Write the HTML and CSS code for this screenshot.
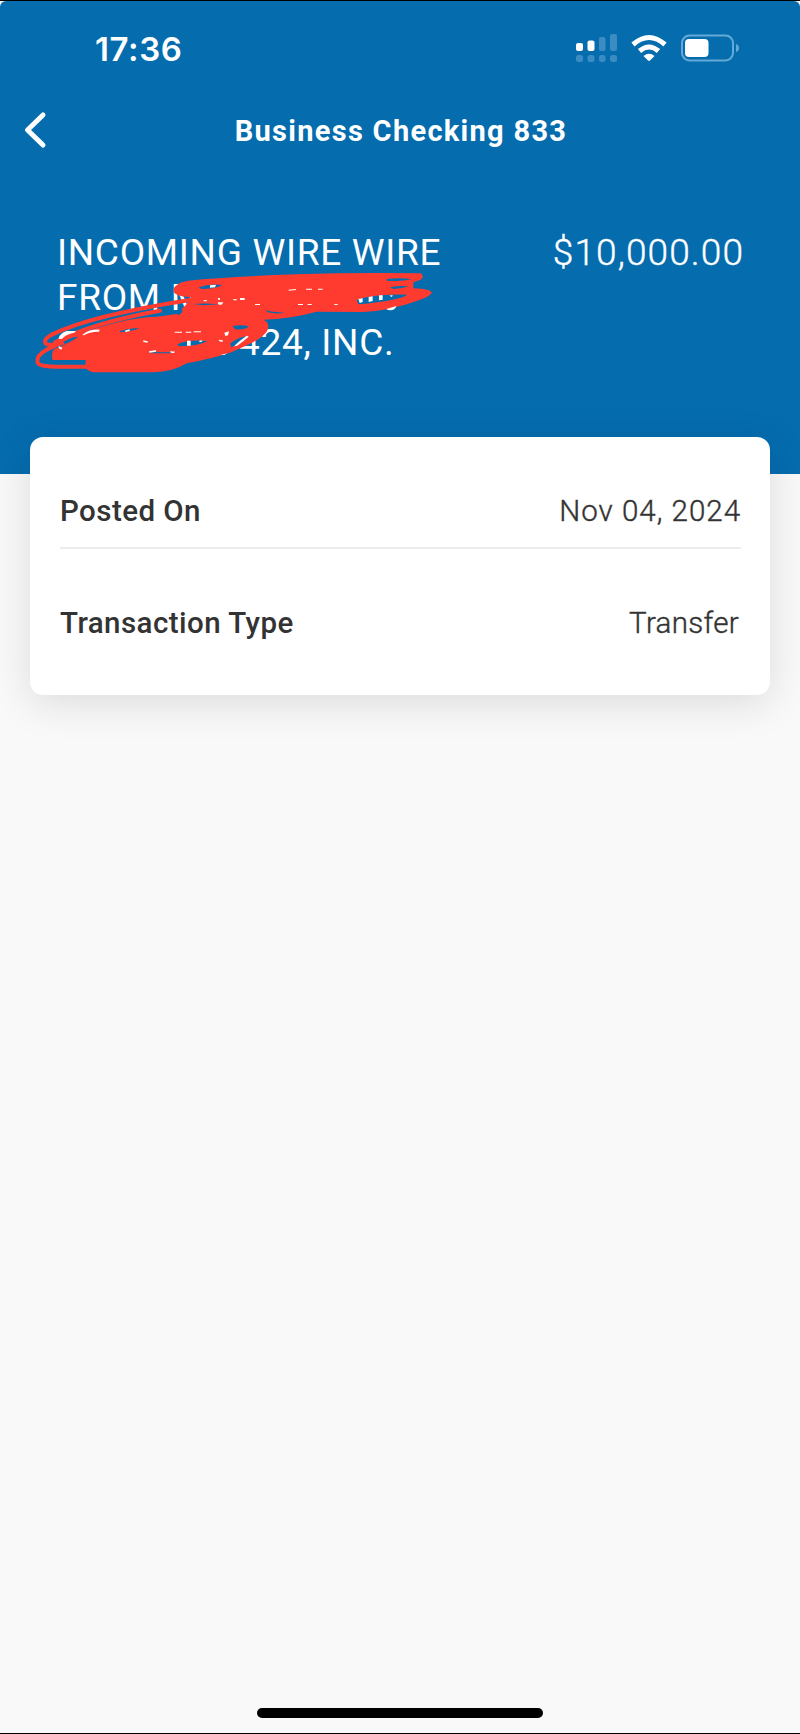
FILE: index.html
```html
<!DOCTYPE html>
<html lang="en">
  <head>
    <meta charset="UTF-8" />
    <meta name="viewport" content="width=device-width, initial-scale=1.0" />
    <title>Business Checking 833</title>
    <link rel="stylesheet" href="styles.css">
  </head>
  <body>
    <div class="screen">
      <header class="header">
        <div class="status-bar">
          <div class="time">17:36</div>
          <svg class="status-icons" width="170" height="32" viewBox="0 0 170 32">
            <g fill="#fff">
              <rect x="6" y="11" width="7" height="8" rx="2" />
              <rect x="17.5" y="8.5" width="7" height="10.5" rx="2" />
            </g>
            <g fill="#3a8cc3">
              <rect x="29" y="5" width="6.5" height="14" rx="2" />
              <rect x="40" y="2" width="7" height="17" rx="2" />
              <rect x="6" y="23" width="7" height="7" rx="2.5" />
              <rect x="17.5" y="23" width="7" height="7" rx="2.5" />
              <rect x="29" y="23" width="6.5" height="7" rx="2.5" />
              <rect x="40" y="23" width="7" height="7" rx="2.5" />
            </g>
            <g fill="none" stroke="#fff" stroke-width="5">
              <path d="M63 12.5Q79 -1.5 95 12.5" />
              <path d="M69.5 19Q79 11 88.5 19" />
            </g>
            <path d="M73.5 24Q79 19.5 84.5 24L80 28.5Q79 29.3 78 28.5Z" fill="#fff" />
            <rect x="112" y="3.5" width="51" height="25" rx="7.5" fill="none" stroke="#65a9d5" stroke-width="2" />
            <rect x="115" y="7" width="23.5" height="18" rx="4" fill="#fff" />
            <path d="M166 12Q169 13 169 16T166 20Z" fill="#65a9d5" />
          </svg>
        </div>
        <nav class="nav">
          <svg class="back" width="24" height="38" viewBox="0 0 24 38">
            <path d="M20 4L4.5 19L20 34" fill="none" stroke="#fff" stroke-width="5" stroke-linecap="round" stroke-linejoin="round" />
          </svg>
          <h1 class="title">Business Checking 833</h1>
        </nav>
        <div class="summary">
          <div class="description">
            <div class="line1">INCOMING WIRE WIRE</div>
            <div class="line2">FROM M</div>
            <div class="line3">424, INC.</div>
            <svg class="scribble" width="420" height="160" viewBox="0 0 1260 480">
              <g fill="#ff3b30">
                <path d="M430 210Q432 190 475 182Q600 170 800 163Q980 157 1172 160Q1185 170 1172 179L1150 187L1150 205Q1207 207 1205 220Q1195 232 1160 243Q1080 272 1000 276L860 275Q780 297 700 299Q724 310 710 335Q690 362 620 389Q590 406 470 430Q430 455 370 457L190 457Q168 452 166 438L167 420L68 420Q62 400 72 388Q118 370 150 341Q260 302 350 292L440 288Q464 278 455 266Q478 248 482 231Q430 230 430 210Z" />
              </g>
              <g fill="none" stroke="#ff3b30" stroke-width="12" stroke-linecap="round">
                <path d="M480 240C320 265 150 302 65 344C35 360 40 377 70 374C160 335 280 310 440 288" />
                <path d="M150 348C70 378 18 395 22 425C24 443 75 440 175 440" />
                <path d="M75 367C140 333 230 300 390 272" />
              </g>
              <!-- gaps between the pen strokes -->
              <g fill="#056cae">
                <path d="M100 366Q125 350 145 350Q130 362 104 372Z" />
                <path d="M505 202Q540 190 578 195Q555 207 515 207Z" />
                <path d="M1070 177Q1110 172 1145 178Q1110 186 1070 182Z" />
                <path d="M1080 202Q1110 196 1135 199Q1115 207 1090 207Z" />
                <path d="M980 239Q1040 222 1132 224Q1110 241 985 253Z" />
                <path d="M607 319Q632 313 657 319Q643 331 616 328Z" />
                <path d="M441 374Q470 358 532 363Q510 377 450 379Z" />
                <path d="M600 371Q620 354 650 348Q634 370 604 382Z" />
                <path d="M490 252Q525 249 566 253L520 256Z" />
                <path d="M705 270Q725 277 765 278Q738 283 714 277Z" />
                <path d="M270 333Q300 323 328 325Q315 333 270 337Z" />
                <path d="M360 397H432L420 400H360Z" />
              </g>
              <g fill="#fff">
                <path d="M85 356Q90 339 110 333H138L133 338Q105 343 96 357Z" />
                <path d="M157 345Q177 327 209 329L207 335Q180 334 162 346Z" />
                <path d="M86 378L97 383L94 389L86 385Z" />
                <path d="M284 332L299 328V333L287 336Z" />
                <path d="M340 361L353 364V368L340 366Z" />
                <path d="M357 394L378 390V395L359 398Z" />
                <path d="M421 393L435 395L432 399L422 398Z" />
                <path d="M434 335H456V338H434ZM467 335H484V338H467ZM491 334H513V337H491Z" />
                <path d="M471 362H482V377H471ZM508 362L518 361L514 366H508Z" />
                <path d="M583 338L597 334L594 346L586 348ZM566 359L579 361L577 366L568 364Z" />
                <path d="M566 402Q580 405 592 399L583 405Z" />
                <path d="M612 379Q630 360 650 347L656 350Q640 364 622 377Z" />
                <path d="M540 196L558 194L555 202L540 203Z" />
                <path d="M563 247H580L575 254H566ZM564 234H570V239H564ZM521 240H530V244H521Z" />
                <path d="M610 237H620V241H610ZM630 234H644V240H630ZM675 252H690V255H675Z" />
                <path d="M776 209L798 207V210L776 212ZM828 206H846V209H828ZM864 206H878V209H864Z" />
                <path d="M804 252H819V255H804ZM833 252H845V255H833ZM913 252H923V255H913Z" />
                <path d="M985 237L998 235V246L989 249ZM1016 231L1028 229V243L1016 246ZM1047 226H1058V239L1047 241ZM1078 227L1088 225L1086 231Z" />
                <path d="M1069 267L1099 258Q1096 270 1082 271Q1072 271 1069 267Z" />
              </g>
            </svg>
          </div>
          <div class="amount">$10,000.00</div>
        </div>
      </header>
      <main class="card">
        <div class="row">
          <span class="label">Posted On</span>
          <span class="value date">Nov 04, 2024</span>
        </div>
        <div class="row">
          <span class="label">Transaction Type</span>
          <span class="value transfer">Transfer</span>
        </div>
      </main>
      <div class="home-indicator"></div>
    </div>
  </body>
</html>
```
FILE: styles.css
```css
* {
  box-sizing: border-box;
}
body {
  margin: 0;
  background: #fff;
  font-family: Roboto, "Liberation Sans", sans-serif;
}
.screen {
  display: flex;
  flex-direction: column;
  height: 1734px;
  border-top: 1px solid #000;
  border-bottom: 1px solid #000;
  background: #f9f9f9;
  overflow: hidden;
}
.header {
  height: 473px;
  flex-shrink: 0;
  background: #056cae;
  color: #fff;
  border-radius: 6px 6px 0 0;
  box-shadow: 0 -8px 0 #fff;
}
.status-bar {
  display: flex;
  justify-content: space-between;
  align-items: center;
  height: 94px;
  padding: 0 60px 0 95px;
}
.time {
  font-family: Inter, "Liberation Sans", sans-serif;
  font-size: 33px;
  font-weight: 600;
  line-height: 40px;
  letter-spacing: 0.6px;
  margin-top: 2px;
}
.nav {
  display: grid;
  grid-template-columns: 24px 1fr 24px;
  align-items: center;
  height: 70px;
  padding: 0 23px;
}
.title {
  margin: 2px 0 0 2px;
  text-align: center;
  font-size: 29px;
  font-weight: 700;
  letter-spacing: 1.3px;
}
.summary {
  display: flex;
  justify-content: space-between;
  padding: 65px 57px 0 57px;
}
.description {
  position: relative;
  font-size: 37px;
  line-height: 45px;
  letter-spacing: 0.7px;
  white-space: nowrap;
}
.line3 {
  padding-left: 182px;
}
.scribble {
  position: absolute;
  left: -27px;
  top: -10px;
}
.amount {
  font-size: 37px;
  font-weight: 300;
  line-height: 45px;
  letter-spacing: 1.1px;
  margin-right: -1px;
  -webkit-text-stroke: 0.4px #fff;
}
.card {
  position: relative;
  width: 740px;
  height: 258px;
  flex-shrink: 0;
  margin: -37px 30px 0;
  padding: 37px 29px 0 30px;
  border-radius: 13px;
  background: #fff;
  box-shadow: 0 8px 40px rgba(0, 0, 0, 0.12);
}
.row {
  display: flex;
  justify-content: space-between;
  height: 75px;
  line-height: 75px;
  color: #333;
  font-size: 29.5px;
}
.row:first-child {
  border-bottom: 2px solid #ececec;
  margin-bottom: 37px;
}
.label {
  font-weight: 500;
  letter-spacing: 0.45px;
}
.value {
  font-weight: 300;
  -webkit-text-stroke: 0.4px #333;
}
.date {
  letter-spacing: 1px;
}
.transfer {
  letter-spacing: 0.3px;
  margin-right: 2px;
}
.home-indicator {
  width: 286px;
  height: 10px;
  margin: auto auto 15px;
  border-radius: 5px;
  background: #000;
}
```
